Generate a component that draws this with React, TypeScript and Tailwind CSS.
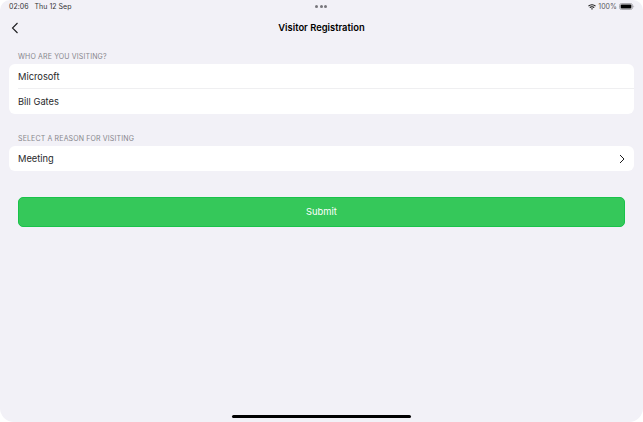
export default function App() {
  return (
    <div className="h-[422px] w-[643px] overflow-hidden bg-white font-['Inter',sans-serif] text-black">
      <div className="flex h-full flex-col items-center rounded-[10px] rounded-b-[14px] bg-[#f2f1f7]">
        <header className="grid h-[14px] w-full shrink-0 grid-cols-3 items-center pl-[9px] pr-[8px] text-[7px] leading-[14px] text-[#333336]">
          <div className="flex gap-[6px] tracking-[0.02px]"><span>02:06</span><span>Thu 12 Sep</span></div>
          <div className="flex justify-center gap-[1.5px] pb-[2px] pr-px">
            <i className="size-[3px] rounded-full bg-[#77767b]" />
            <i className="size-[3px] rounded-full bg-[#77767b]" />
            <i className="size-[3px] rounded-full bg-[#77767b]" />
          </div>
          <div className="flex items-center justify-end gap-[2px]">
            <svg width="8" height="6" viewBox="0 0 8 6" fill="none" stroke="#111" strokeWidth="1.1"><path d="M.5 2.2a5 5 0 0 1 7 0M1.8 3.7a3.1 3.1 0 0 1 4.4 0" /><path d="M3 4.7a1.4 1.4 0 0 1 2 0L4 5.7z" fill="#111" stroke="none" /></svg>
            <span className="tracking-[0.05px] text-[#59595d]">100%</span>
            <svg className="-mt-px" width="16" height="7" viewBox="0 0 16 7"><rect x=".5" y=".5" width="13" height="6" rx="2" fill="none" stroke="#99989d" strokeWidth=".8" /><rect x="1.6" y="1.5" width="10.8" height="4" rx="1" /><path d="M14.5 2.3q1.4 1.2 0 2.4z" fill="#99989d" /></svg>
          </div>
        </header>
        <nav className="grid h-[28px] w-full shrink-0 grid-cols-[1fr_auto_1fr] items-center px-[11px]">
          <svg width="8" height="12" viewBox="0 0 8 12" fill="none" stroke="#1c1c1e" strokeWidth="1.1"><path d="M6.5 1 1.5 6l5 5" /></svg>
          <h1 className="text-[9.4px] font-semibold">Visitor Registration</h1>
        </nav>
        <main className="w-full px-[9px] pt-[9px]">
          <h2 className="h-[13px] pl-[9px] text-[7px] leading-[11px] tracking-[0.15px] text-[#87868c]">WHO ARE YOU VISITING?</h2>
          <div className="rounded-[6px] bg-white text-[9.3px] text-[#29292b]">
            <div className="ml-[9px] flex h-[25px] items-center border-b border-[#efeff1] pt-[2px]">Microsoft</div>
            <div className="ml-[9px] flex h-[25px] items-center pt-px">Bill Gates</div>
          </div>
          <h2 className="mt-[19px] h-[13px] pl-[9px] text-[7px] leading-[11px] tracking-[0.15px] text-[#87868c]">SELECT A REASON FOR VISITING</h2>
          <div className="flex h-[25px] items-center justify-between rounded-[6px] bg-white px-[9px] text-[9.3px] text-[#29292b]">
            <span className="pt-px">Meeting</span>
            <svg width="6" height="10" viewBox="0 0 6 10" fill="none" stroke="#1c1c1e" strokeWidth="1"><path d="m1 1 4 4-4 4" /></svg>
          </div>
          <div className="px-[9px] pt-[26px]"><button className="block h-[30px] w-full rounded-[5px] border border-[#19c34a] bg-[#35c85a] pt-px text-[9.4px] text-white">Submit</button></div>
        </main>
        <div className="mb-[4px] mt-auto h-[3px] w-[179px] rounded-full bg-black" />
      </div>
    </div>
  );
}
